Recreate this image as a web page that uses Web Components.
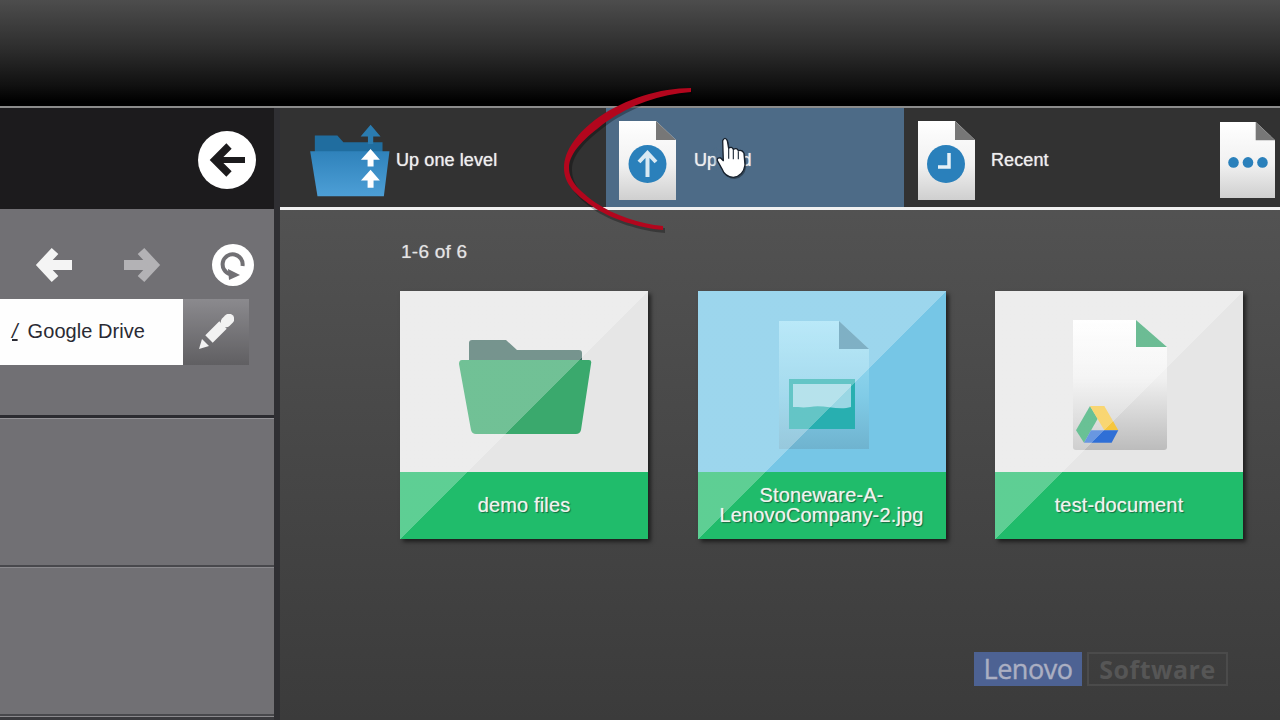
<!DOCTYPE html>
<html lang="en">
<head>
<meta charset="utf-8">
<title>File browser</title>
<style>
html,body{margin:0;padding:0;width:1280px;height:720px;overflow:hidden;background:#333;font-family:"Liberation Sans",Arial,sans-serif}
</style>
</head>
<body>
<app-shell>
  <side-panel slot="side">
    <nav-icon slot="nav" kind="back"></nav-icon>
    <nav-icon slot="nav" kind="forward"></nav-icon>
    <nav-icon slot="nav" kind="refresh"></nav-icon>
    <path-bar slot="path">Google Drive</path-bar>
  </side-panel>
  <tool-bar slot="tools">
    <tool-item kind="parent">Up one level</tool-item>
    <tool-item kind="up" active>Upload</tool-item>
    <tool-item kind="clock">Recent</tool-item>
    <tool-item kind="dots"></tool-item>
  </tool-bar>
  <file-grid slot="content" count="1-6 of 6">
    <file-card kind="folder">demo files</file-card>
    <file-card kind="image" selected>Stoneware-A-LenovoCompany-2.jpg</file-card>
    <file-card kind="drive">test-document</file-card>
  </file-grid>
  <brand-mark slot="content-foot"></brand-mark>
</app-shell>
<script>
function define(name, render){
  customElements.define(name, class extends HTMLElement{
    constructor(){super();this.attachShadow({mode:'open'});}
    connectedCallback(){this.shadowRoot.innerHTML=render(this);}
  });
}
define('app-shell',()=>`
<style>
:host{display:flex;flex-direction:column;width:1280px;height:720px;position:relative;overflow:hidden}
.top{height:106px;flex:none;background:linear-gradient(#4d4d4d 0,#2e2e2e 45%,#111 80%,#000 96%)}
.rule{height:2px;flex:none;background:#8b8b8b}
.body{flex:1;display:flex;min-height:0}
.main{flex:1;min-width:0;display:flex;flex-direction:column;background:linear-gradient(#575757,#4a4a4a 45%,#3b3b3b)}
.fill{flex:1;min-height:0;display:flex;flex-direction:column}
.foot{display:flex;justify-content:flex-end;padding:0 52px 34px 0}
.ink{position:absolute;left:0;top:0;width:1280px;height:720px;pointer-events:none}
</style>
<div class="top"></div>
<div class="rule"></div>
<div class="body">
  <slot name="side"></slot>
  <div class="main">
    <slot name="tools"></slot>
    <div class="fill"><slot name="content"></slot></div>
    <div class="foot"><slot name="content-foot"></slot></div>
  </div>
</div>
<svg class="ink" viewBox="0 0 1280 720" aria-hidden="true">
  <defs><filter id="bl" x="-30%" y="-30%" width="160%" height="160%"><feGaussianBlur stdDeviation="1.500"/></filter></defs>
  <path d="M664 231C640 229 610 220 592 207C576 196 566 184 566 168C566 150 580 133 600 118C625 100 660 89 691 88L691 92C660 94 630 106 606 123C586 138 571 152 571 168C571 182 581 193 596 204C614 216 640 224 664 226Z" fill="#000" opacity=".3" transform="translate(1 2)"/>
  <path d="M663 230C640 228 610 219 592 206C576 195 564 184 564 168C564 150 578 132 599 117C625 99 660 88 691 88L691 92C660 94 630 105 606 122C586 137 569 152 569 168C569 182 581 192 596 203C614 215 640 224 663 226Z" fill="#b3061d"/>
  <rect x="716" y="150" width="10" height="18" fill="#4d6b87" filter="url(#bl)"/>
  <svg x="680" y="120" width="90" height="70" viewBox="0 0 270 210">
    <path d="M128 62Q135 48 142 62L146 85Q155 78 160 88Q170 82 175 92Q187 88 192 100L195 135Q190 168 160 172Q135 172 125 145L112 122Q110 112 122 114L130 122Z" fill="#000" opacity=".35" transform="translate(4 5)" filter="url(#bl)"/>
    <path d="M128 62Q135 48 142 62L146 85Q155 78 160 88Q170 82 175 92Q187 88 192 100L195 135Q190 168 160 172Q135 172 125 145L112 122Q110 112 122 114L130 122Z" fill="#fff" stroke="#16202c" stroke-width="4" stroke-linejoin="round"/>
    <path d="M146 86V116M160 90V118M175 94V118" stroke="#26313d" stroke-width="3.500" fill="none"/>
  </svg>
</svg>`);

define('side-panel',()=>`
<style>
:host{display:flex;flex-direction:column;width:274px;flex:none;background:#717074;border-right:6px solid #2f2f33;position:relative;z-index:1}
.head{height:101px;flex:none;background:#1c1b1d;display:flex;align-items:center;justify-content:flex-end;padding:3px 18px 0 0;box-sizing:border-box}
.nav{height:209px;flex:none;box-sizing:border-box;padding-top:35px;border-bottom:3px solid #2b2b30;box-shadow:0 1px 0 #949397}
.icons{display:flex;padding-left:35px;align-items:center;height:42px}
.path{margin-top:13px}
.sec{height:149px;flex:none;box-sizing:border-box;border-bottom:2px solid #48484c;box-shadow:0 1px 0 #8a898d}
.sec.b{height:148px;margin-top:1px}
.end{flex:1;background:#3a3a3e;margin-top:1px}
::slotted(nav-icon:nth-of-type(2)){margin-left:50px}
::slotted(nav-icon:nth-of-type(3)){margin-left:51px}
svg{display:block}
</style>
<div class="head"><svg width="58" height="58" viewBox="0 0 58 58" aria-hidden="true"><circle cx="29" cy="29" r="29" fill="#fff"/><path d="M47 29H20" fill="none" stroke="#1c1b1d" stroke-width="6"/><path d="M31 15L17 29L31 43" fill="none" stroke="#1c1b1d" stroke-width="7.500"/></svg></div>
<div class="nav">
  <div class="icons"><slot name="nav"></slot></div>
  <div class="path"><slot name="path"></slot></div>
</div>
<div class="sec"></div>
<div class="sec b"></div>
<div class="end"></div>`);

define('nav-icon',(el)=>{
  const k=el.getAttribute('kind');
  let svg='';
  if(k==='back') svg=`<svg width="38" height="38" viewBox="0 0 38 38"><path d="M37 19H12" fill="none" stroke="#f4f4f4" stroke-width="10"/><path d="M20 5L7 19L20 33" fill="none" stroke="#f4f4f4" stroke-width="9"/></svg>`;
  if(k==='forward') svg=`<svg width="38" height="38" viewBox="0 0 38 38"><path d="M1 19H26" fill="none" stroke="#b3b2b5" stroke-width="10"/><path d="M18 5L31 19L18 33" fill="none" stroke="#b3b2b5" stroke-width="9"/></svg>`;
  if(k==='refresh') svg=`<svg width="42" height="42" viewBox="0 0 42 42"><circle cx="21" cy="21" r="21" fill="#fff"/><path d="M30.500 22A10 10 0 1 0 18 30" fill="none" stroke="#717074" stroke-width="4"/><path d="M16 25L28 31L17 36Z" fill="#717074"/></svg>`;
  return `<style>:host{display:block;flex:none;line-height:0}</style>${svg}`;
});

define('path-bar',()=>`
<style>
:host{display:flex;width:249px;height:66px}
.field{width:183px;background:#fefefe;display:flex;align-items:center;padding:0 0 2px 12px;box-sizing:border-box;font:20px "Liberation Sans",Arial,sans-serif;color:#2a2a33;gap:10px;white-space:nowrap;letter-spacing:.05px}
.sl{font-style:italic;text-decoration:underline}
.edit{width:66px;background:linear-gradient(#8b8a8e,#605f62);display:flex;align-items:center;justify-content:center}
</style>
<div class="field"><span class="sl">/</span><span><slot></slot></span></div>
<div class="edit"><svg width="36" height="36" viewBox="0 0 36 36" aria-hidden="true"><path d="M11 25L25 11" fill="none" stroke="#f2f2f2" stroke-width="10.500"/><path d="M28 8L31 5" fill="none" stroke="#f2f2f2" stroke-width="10.500" stroke-linecap="round"/><path d="M1 35L4 25L11 32Z" fill="#f2f2f2"/></svg></div>`);

define('tool-bar',()=>`
<style>
:host{display:flex;height:99px;background:#323232;border-bottom:3px solid #f1f1f1;flex:none;overflow:hidden}
</style><slot></slot>`);

const docBg=`<defs><linearGradient id="d" x1="0" y1="0" x2="0" y2="1"><stop offset="0" stop-color="#fff"/><stop offset=".55" stop-color="#f1f1f1"/><stop offset="1" stop-color="#cfcfcf"/></linearGradient></defs><path d="M0 0H37L57 19V79H0Z" fill="url(#d)"/><path d="M37 0L57 19H37Z" fill="#777"/>`;
define('tool-item',(el)=>{
  const k=el.getAttribute('kind');
  const active=el.hasAttribute('active');
  let ic='';
  const blue='#2a80bb';
  if(k==='parent') ic=`<svg class="icon" width="80" height="73" viewBox="58 130 240 220" aria-hidden="true"><defs><linearGradient id="f" x1="0" y1="0" x2="0" y2="1"><stop offset="0" stop-color="#2f82bb"/><stop offset="1" stop-color="#4d9fd6"/></linearGradient></defs><path d="M72 165H140L158 185H276V215H72Z" fill="#206d9f"/><path d="M58 212H297L280 348H80Z" fill="url(#f)"/><path d="M240 132L270 168H248V190H232V168H210Z" fill="#2b7cb0"/><path d="M240 205L268 238H249V258H231V238H211Z" fill="#fff"/><path d="M240 268L268 300H249V322H231V300H211Z" fill="#fff"/></svg>`;
  if(k==='up') ic=`<svg class="icon" width="57" height="79" viewBox="0 0 57 79" aria-hidden="true">${docBg}<circle cx="28.500" cy="43" r="19" fill="${blue}"/><path d="M28.500 56V33M20 41L28.500 32L37 41" fill="none" stroke="#d8e9f3" stroke-width="4"/></svg>`;
  if(k==='clock') ic=`<svg class="icon" width="57" height="79" viewBox="0 0 57 79" aria-hidden="true">${docBg}<circle cx="28" cy="43" r="19" fill="${blue}"/><path d="M31 32V46H20" fill="none" stroke="#e6f1f7" stroke-width="3.500"/></svg>`;
  if(k==='dots') ic=`<svg class="icon" width="55" height="78" viewBox="0 0 57 79" aria-hidden="true">${docBg}<circle cx="14" cy="42" r="5.500" fill="${blue}"/><circle cx="29" cy="42" r="5.500" fill="${blue}"/><circle cx="44" cy="42" r="5.500" fill="${blue}"/></svg>`;
  const w={parent:326,up:298,clock:298,dots:78}[k];
  const pl={parent:30,up:13,clock:14,dots:18}[k];
  const gap={parent:6,up:18,clock:16,dots:0}[k];
  return `<style>
  :host{display:flex;align-items:center;flex:none;box-sizing:border-box;width:${w}px;padding:5px 0 0 ${pl}px;gap:${gap}px;background:${active?'#4d6b87':'transparent'};color:#eee}
  .icon{flex:none;display:block}
  .t{font:18px "Liberation Sans",Arial,sans-serif;white-space:nowrap;letter-spacing:.1px;text-shadow:0 0 1px rgba(255,255,255,.8)}
  </style>${ic}<span class="t"><slot></slot></span>`;
});

define('file-grid',(el)=>`
<style>
:host{display:block;padding:31px 0 0 120px}
.count{font:19px/22px "Liberation Sans",Arial,sans-serif;letter-spacing:.25px;color:#e4e4e4;margin:0 0 28px 1px;text-shadow:0 0 1px rgba(255,255,255,.5)}
.cards{display:grid;grid-template-columns:repeat(3,248px);gap:49.5px}
</style>
<div class="count">${el.getAttribute('count')}</div>
<div class="cards"><slot></slot></div>`);

const art={
folder:`<svg viewBox="0 0 248 181" width="248" height="181" aria-hidden="true">
  <path d="M69 52Q69 49 72 49H106L117 59H179Q182 59 182 62V72H69Z" fill="#416b63"/>
  <path d="M62 69H189Q192 69 191 73L181 139Q180 143 176 143H76Q72 143 71 139L59 73Q59 69 62 69Z" fill="#3aa96d"/></svg>`,
image:`<svg viewBox="0 0 248 181" width="248" height="181" aria-hidden="true">
  <defs><linearGradient id="b" x1="0" y1="0" x2="0" y2="1"><stop offset="0" stop-color="#9fe0f6"/><stop offset=".6" stop-color="#80cbe6"/><stop offset="1" stop-color="#6fb3cf"/></linearGradient></defs>
  <path d="M81 30H141L171 58V158H81Z" fill="url(#b)"/><path d="M141 30L171 58H141Z" fill="#4e92ae"/>
  <rect x="91" y="88" width="66" height="50" fill="#28afb0"/><path d="M95 93H153V116C140 120 125 113 112 116C105 117 100 116 95 116Z" fill="#9ad7e4"/></svg>`,
drive:`<svg viewBox="0 0 248 181" width="248" height="181" aria-hidden="true">
  <defs><linearGradient id="g" x1="0" y1="0" x2="0" y2="1"><stop offset="0" stop-color="#fff"/><stop offset=".45" stop-color="#f0f0f0"/><stop offset="1" stop-color="#bcbcbc"/></linearGradient></defs>
  <path d="M78 29H141L172 56V156Q172 159 169 159H81Q78 159 78 156Z" fill="url(#g)"/><path d="M141 29L172 56H141Z" fill="#33a26b"/>
  <g transform="translate(81 115) scale(.333)"><path d="M42 0L0 73L24 110L65 38Z" fill="#2fa96c"/><path d="M42 0H85L127 73H85Z" fill="#f6c63c"/><path d="M45 73H127L107 110H24Z" fill="#2f6fd6"/></g></svg>`
};
define('file-card',(el)=>{
  const k=el.getAttribute('kind');
  const sel=el.hasAttribute('selected');
  return `<style>
  :host{display:block;position:relative;width:248px;height:248px;box-shadow:3px 3px 4px rgba(0,0,0,.55);overflow:hidden}
  .pic{height:181px;background:${sel?'#76c6e6':'#e6e6e6'}}
  .pic svg{display:block}
  .label{height:67px;box-sizing:border-box;background:#20bc6b;color:#f1f3ee;display:flex;align-items:center;justify-content:center;text-align:center;padding:0 8px 2px;font:20px/20px "Liberation Sans",Arial,sans-serif;letter-spacing:.15px;text-shadow:0 0 1px rgba(255,255,255,.6),1px 1px 1px rgba(0,60,30,.7)}
  .sheen{position:absolute;inset:0;background:linear-gradient(to bottom right,rgba(255,255,255,.28) 50%,rgba(255,255,255,0) 50.1%);pointer-events:none}
  </style><div class="pic">${art[k]}</div><div class="label"><span><slot></slot></span></div><div class="sheen"></div>`;
});

define('brand-mark',()=>`
<style>
:host{display:flex;gap:5px;height:34px;align-items:stretch}
.a{width:108px;background:#4d6293;color:#abafc2;font:400 27px/34px "Open Sans","Liberation Sans",sans-serif;text-align:center;letter-spacing:-.5px;-webkit-text-stroke:.4px #abafc2}
.b{width:141px;box-sizing:border-box;border:2px solid #4b4b4b;color:#565656;font:bold 25px/31px "Open Sans","Liberation Sans",sans-serif;text-align:center;letter-spacing:.5px}
</style><div class="a">Lenovo</div><div class="b">Software</div>`);
</script>
</body>
</html>
